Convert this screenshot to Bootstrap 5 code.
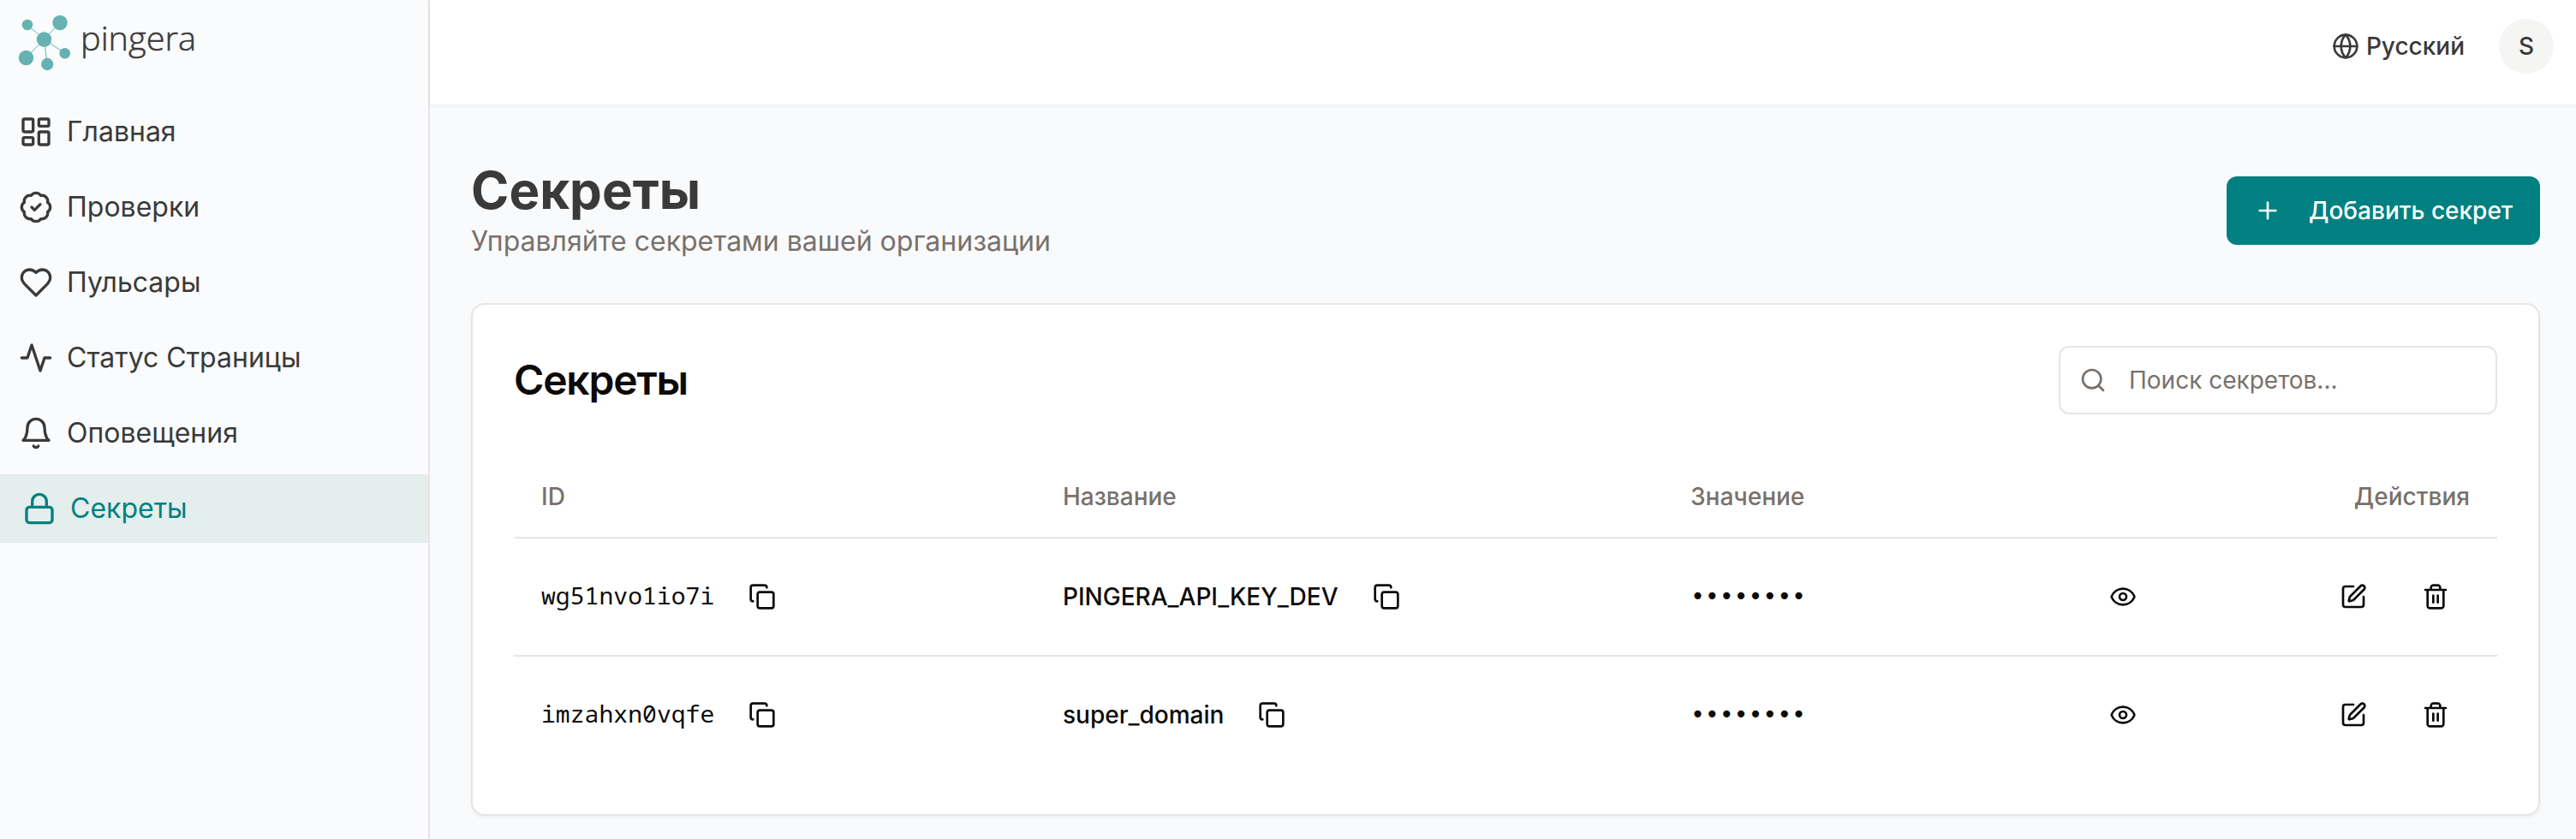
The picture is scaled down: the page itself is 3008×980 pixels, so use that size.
<!DOCTYPE html>
<html lang="ru">
<head>
<meta charset="utf-8">
<meta name="viewport" content="width=device-width, initial-scale=1">
<title>Pingera — Секреты</title>
<link href="https://cdn.jsdelivr.net/npm/bootstrap@5.3.0/dist/css/bootstrap.min.css" rel="stylesheet">
<style>
  :root { --ink: #3a3a3a; --muted: #78716c; --line: #e7e5e4; --teal: #008080; }
  body { font-family: Inter, "Noto Sans", sans-serif; font-size: 28px; line-height: 40px; color: #0c0a09; background: #f9fafb; height: 980px; overflow: hidden; }
  .ico { width: 32px; height: 32px; fill: none; stroke: currentColor; stroke-width: 2; stroke-linecap: round; stroke-linejoin: round; flex: none; display: block; }
  .sidebar { width: 502px; border-right: 2px solid var(--line); background: #fafbfc; flex: none; }
  .logo { width: 240px; height: 100px; display: block; margin-bottom: 14px; }
  .side-nav { gap: 8px; }
  .side-nav .nav-link { height: 80px; padding: 0 22px; gap: 16px; color: var(--ink); font-size: 32px; line-height: 48px; border-radius: 0; }
  .side-nav .nav-link.active { background: #e3eeed; color: var(--teal); padding-left: 26px; }
  .side-nav .ico { width: 40px; height: 40px; }
  .topbar { height: 122px; padding: 0 26px 14px 0; gap: 40px; background: #fff; box-shadow: 0 2px 4px rgba(0,0,0,.05); color: var(--ink); }
  .avatar { width: 64px; height: 64px; background: #f5f5f4; }
  .lang { gap: 8px; }
  .content { padding: 68px 42px 0 48px; }
  .page-head { margin-bottom: 48px; }
  .page-title { font-size: 60px; line-height: 64px; font-weight: 700; color: var(--ink); margin-bottom: 4px; }
  .page-sub { font-size: 32px; line-height: 48px; color: var(--muted); }
  .btn-add { --bs-btn-color: #fff; --bs-btn-bg: var(--teal); --bs-btn-border-width: 0; --bs-btn-hover-bg: #006d6d; --bs-btn-hover-color: #fff; --bs-btn-font-size: 28px; --bs-btn-font-weight: 500; --bs-btn-border-radius: 12px; width: 366px; height: 80px; padding: 0 32px; gap: 32px; margin-bottom: 4px; }
  .panel { border: 2px solid var(--line); border-radius: 16px; padding: 48px; height: 599px; box-shadow: 0 2px 4px rgba(0,0,0,.05); }
  .panel-title { font-size: 48px; line-height: 48px; font-weight: 600; letter-spacing: -1.2px; }
  .search { width: 512px; height: 80px; border: 2px solid #e5e5e5; border-radius: 12px; padding: 0 22px; gap: 26px; color: var(--muted); }
  .search input { font-size: 28px; color: inherit; }
  .search input::placeholder { color: var(--muted); opacity: 1; }
  .secrets { margin: 48px 0 0; table-layout: fixed; --bs-table-bg: transparent; --bs-table-color: #0c0a09; border-color: #e5e5e5; }
  .secrets > :not(caption) > * > * { padding: 0 32px; border-bottom: 2px solid #e5e5e5; vertical-align: middle; }
  .secrets thead th { height: 96px; font-weight: 500; color: var(--muted); }
  .secrets tbody td { height: 138px; font-weight: 500; }
  .secrets tbody tr:last-child td { height: 136px; border-bottom: 0; }
  .secrets .mono { font-family: "Noto Sans Mono", "DejaVu Sans Mono", monospace; font-weight: 400; letter-spacing: .06px; padding-bottom: 4px; }
  .secrets .dots { font-family: "DejaVu Sans Mono", monospace; font-weight: 400; }
  .btn-ghost { width: 80px; height: 72px; padding: 0; border: 0; color: #0c0a09; display: flex; align-items: center; justify-content: center; }
  .cell { gap: 16px; }
</style>
</head>
<body>
<svg class="d-none" xmlns="http://www.w3.org/2000/svg">
  <symbol id="i-dash" viewBox="0 0 24 24"><rect width="7" height="9" x="3" y="3" rx="1"/><rect width="7" height="5" x="14" y="3" rx="1"/><rect width="7" height="9" x="14" y="12" rx="1"/><rect width="7" height="5" x="3" y="16" rx="1"/></symbol>
  <symbol id="i-check" viewBox="0 0 24 24"><path d="M3.85 8.62a4 4 0 0 1 4.78-4.77 4 4 0 0 1 6.74 0 4 4 0 0 1 4.78 4.78 4 4 0 0 1 0 6.74 4 4 0 0 1-4.77 4.78 4 4 0 0 1-6.75 0 4 4 0 0 1-4.78-4.77 4 4 0 0 1 0-6.76Z"/><path d="m9 12 2 2 4-4"/></symbol>
  <symbol id="i-heart" viewBox="0 0 24 24"><path d="M19 14c1.49-1.46 3-3.21 3-5.5A5.5 5.5 0 0 0 16.5 3c-1.76 0-3 .5-4.5 2-1.5-1.5-2.74-2-4.5-2A5.5 5.5 0 0 0 2 8.5c0 2.3 1.5 4.05 3 5.5l7 7Z"/></symbol>
  <symbol id="i-pulse" viewBox="0 0 24 24"><path d="M22 12h-4l-3 9L9 3l-3 9H2"/></symbol>
  <symbol id="i-bell" viewBox="0 0 24 24"><path d="M6 8a6 6 0 0 1 12 0c0 7 3 9 3 9H3s3-2 3-9"/><path d="M10.3 21a1.94 1.94 0 0 0 3.4 0"/></symbol>
  <symbol id="i-lock" viewBox="0 0 24 24"><rect width="18" height="11" x="3" y="11" rx="2"/><path d="M7 11V7a5 5 0 0 1 10 0v4"/></symbol>
  <symbol id="i-globe" viewBox="0 0 24 24"><circle cx="12" cy="12" r="10"/><path d="M12 2a14.5 14.5 0 0 0 0 20 14.5 14.5 0 0 0 0-20"/><path d="M2 12h20"/></symbol>
  <symbol id="i-plus" viewBox="0 0 24 24"><path d="M5 12h14M12 5v14"/></symbol>
  <symbol id="i-search" viewBox="0 0 24 24"><circle cx="11" cy="11" r="8"/><path d="m21 21-4.3-4.3"/></symbol>
  <symbol id="i-copy" viewBox="0 0 24 24"><rect width="14" height="14" x="8" y="8" rx="2"/><path d="M4 16c-1.1 0-2-.9-2-2V4c0-1.1.9-2 2-2h10c1.1 0 2 .9 2 2"/></symbol>
  <symbol id="i-eye" viewBox="0 0 24 24"><path d="M2.062 12.348a1 1 0 0 1 0-.696 10.75 10.75 0 0 1 19.876 0 1 1 0 0 1 0 .696 10.75 10.75 0 0 1-19.876 0"/><circle cx="12" cy="12" r="3"/></symbol>
  <symbol id="i-edit" viewBox="0 0 24 24"><path d="M12 3H5a2 2 0 0 0-2 2v14a2 2 0 0 0 2 2h14a2 2 0 0 0 2-2v-7"/><path d="M18.375 2.625a1 1 0 0 1 3 3l-9.013 9.014a2 2 0 0 1-.853.505l-2.873.84a.5.5 0 0 1-.62-.62l.84-2.873a2 2 0 0 1 .506-.852z"/></symbol>
  <symbol id="i-trash" viewBox="0 0 24 24"><path d="M3 6h18M19 6v14c0 1-1 2-2 2H7c-1 0-2-1-2-2V6M8 6V4c0-1 1-2 2-2h4c1 0 2 1 2 2v2M10 11v6M14 11v6"/></symbol>
</svg>

<div class="d-flex h-100">
  <aside class="sidebar">
    <svg class="logo" viewBox="0 0 240 100" role="img" aria-label="pingera">
      <path d="M32 29 51.5 46 70 26.3M30.5 67.5 51.5 46 55.2 75M51.5 46 75.7 62.2" fill="none" stroke="#66b2b2" stroke-width="1"/>
      <g fill="#66b2b2"><circle cx="32" cy="29" r="6.3"/><circle cx="70" cy="26.5" r="8.7"/><circle cx="51.5" cy="46" r="8.7"/><circle cx="30.5" cy="67.5" r="8.7"/><circle cx="55.2" cy="75" r="7.2"/><circle cx="75.7" cy="62.2" r="6.3"/></g>
      <text x="94" y="59" font-family="Open Sans, sans-serif" font-weight="300" font-size="39" fill="#3a3a3a" stroke="#3a3a3a" stroke-width=".5" textLength="135" lengthAdjust="spacingAndGlyphs">pingera</text>
    </svg>
    <nav class="side-nav nav flex-column">
      <a class="nav-link d-flex align-items-center" href="#"><svg class="ico"><use href="#i-dash"/></svg>Главная</a>
      <a class="nav-link d-flex align-items-center" href="#"><svg class="ico"><use href="#i-check"/></svg>Проверки</a>
      <a class="nav-link d-flex align-items-center" href="#"><svg class="ico"><use href="#i-heart"/></svg>Пульсары</a>
      <a class="nav-link d-flex align-items-center" href="#"><svg class="ico"><use href="#i-pulse"/></svg>Статус Страницы</a>
      <a class="nav-link d-flex align-items-center" href="#"><svg class="ico"><use href="#i-bell"/></svg>Оповещения</a>
      <a class="nav-link d-flex align-items-center active" href="#"><svg class="ico"><use href="#i-lock"/></svg>Секреты</a>
    </nav>
  </aside>

  <div class="flex-grow-1">
    <header class="topbar d-flex align-items-center justify-content-end">
      <div class="lang d-flex align-items-center fw-medium"><svg class="ico"><use href="#i-globe"/></svg><span>Русский</span></div>
      <div class="avatar rounded-circle d-flex align-items-center justify-content-center fw-medium">S</div>
    </header>

    <main class="content">
      <div class="page-head d-flex justify-content-between align-items-center">
        <div>
          <h1 class="page-title">Секреты</h1>
          <p class="page-sub mb-0">Управляйте секретами вашей организации</p>
        </div>
        <button class="btn btn-add d-flex align-items-center text-nowrap" type="button"><svg class="ico"><use href="#i-plus"/></svg>Добавить секрет</button>
      </div>

      <section class="panel bg-white">
        <div class="d-flex justify-content-between align-items-center">
          <h2 class="panel-title mb-0">Секреты</h2>
          <label class="search d-flex align-items-center"><svg class="ico"><use href="#i-search"/></svg><input class="border-0 bg-transparent p-0 flex-grow-1" type="text" placeholder="Поиск секретов..."></label>
        </div>
        <table class="table secrets">
          <colgroup><col style="width:609px"><col style="width:733px"><col style="width:609px"><col></colgroup>
          <thead><tr><th>ID</th><th>Название</th><th>Значение</th><th class="text-end">Действия</th></tr></thead>
          <tbody>
            <tr>
              <td><div class="cell d-flex align-items-center"><span class="mono">wg51nvo1io7i</span><button class="btn btn-ghost"><svg class="ico"><use href="#i-copy"/></svg></button></div></td>
              <td><div class="cell d-flex align-items-center"><span>PINGERA_API_KEY_DEV</span><button class="btn btn-ghost"><svg class="ico"><use href="#i-copy"/></svg></button></div></td>
              <td><div class="cell d-flex align-items-center justify-content-between"><span class="dots">••••••••</span><button class="btn btn-ghost"><svg class="ico"><use href="#i-eye"/></svg></button></div></td>
              <td><div class="cell d-flex align-items-center justify-content-end"><button class="btn btn-ghost"><svg class="ico"><use href="#i-edit"/></svg></button><button class="btn btn-ghost"><svg class="ico"><use href="#i-trash"/></svg></button></div></td>
            </tr>
            <tr>
              <td><div class="cell d-flex align-items-center"><span class="mono">imzahxn0vqfe</span><button class="btn btn-ghost"><svg class="ico"><use href="#i-copy"/></svg></button></div></td>
              <td><div class="cell d-flex align-items-center"><span>super_domain</span><button class="btn btn-ghost"><svg class="ico"><use href="#i-copy"/></svg></button></div></td>
              <td><div class="cell d-flex align-items-center justify-content-between"><span class="dots">••••••••</span><button class="btn btn-ghost"><svg class="ico"><use href="#i-eye"/></svg></button></div></td>
              <td><div class="cell d-flex align-items-center justify-content-end"><button class="btn btn-ghost"><svg class="ico"><use href="#i-edit"/></svg></button><button class="btn btn-ghost"><svg class="ico"><use href="#i-trash"/></svg></button></div></td>
            </tr>
          </tbody>
        </table>
      </section>
    </main>
  </div>
</div>
<script src="https://cdn.jsdelivr.net/npm/bootstrap@5.3.0/dist/js/bootstrap.bundle.min.js"></script>
</body>
</html>
